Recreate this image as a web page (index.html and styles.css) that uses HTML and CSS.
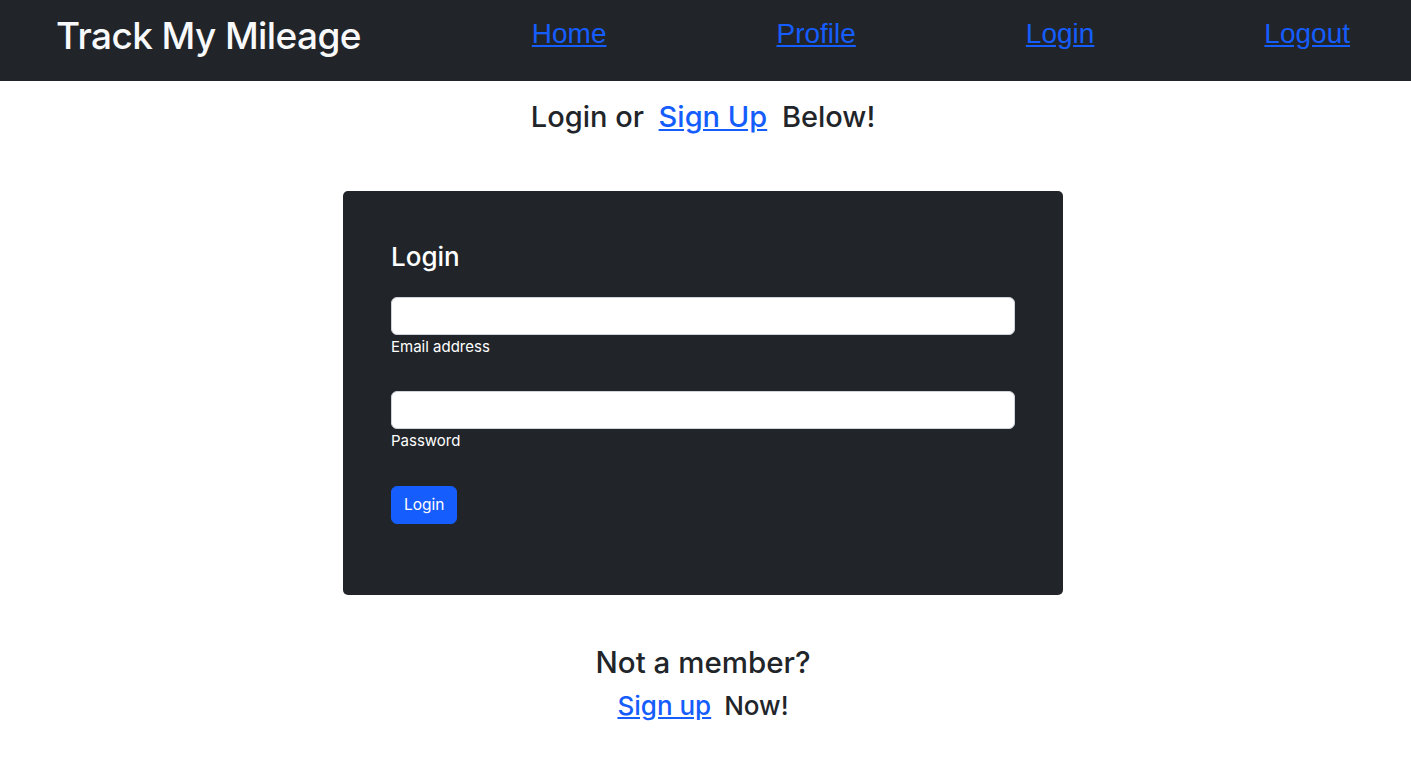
FILE: index.html
```html
<!DOCTYPE html>
<html lang="en">
<head>
<meta charset="utf-8">
<title>Track My Mileage</title>
<link rel="stylesheet" href="styles.css">
</head>
<body>
<nav class="navbar">
  <span class="brand">Track My Mileage</span>
  <ul class="nav-links">
    <li><a href="#">Home</a></li>
    <li><a href="#">Profile</a></li>
    <li><a href="#">Login</a></li>
    <li><a href="#">Logout</a></li>
  </ul>
</nav>
<main class="page">
  <h3 class="lead-title">Login or <a href="#" class="inline-link">Sign Up</a> Below!</h3>
  <section class="card">
    <h4 class="card-title">Login</h4>
    <div class="field">
      <input type="email" class="input">
      <label class="field-label">Email address</label>
    </div>
    <div class="field">
      <input type="password" class="input">
      <label class="field-label">Password</label>
    </div>
    <button class="btn">Login</button>
  </section>
  <h3 class="member-title">Not a member?</h3>
  <h4 class="member-sub"><a href="#" class="inline-link">Sign up</a> Now!</h4>
</main>
</body>
</html>
```
FILE: styles.css
```css
* { box-sizing: border-box; }
html, body { margin: 0; padding: 0; }
body {
  font-family: Inter, "Noto Sans", "Liberation Sans", sans-serif;
  color: #212529;
  background: #fff;
}
a { color: #155dfc; }

.navbar {
  height: 81px;
  background: #212529;
  display: flex;
  align-items: center;
  padding: 0 61px 0 56px;
}
.brand {
  color: #f8f9fa;
  font-size: 37px;
  font-weight: 500;
  letter-spacing: -0.6px;
  margin-top: -10px;
}
.nav-links {
  list-style: none;
  margin: -14px 0 0 auto;
  padding: 0;
  display: flex;
  gap: 170px;
}
.nav-links a {
  font-family: "Liberation Sans", Arial, sans-serif;
  font-size: 28px;
  color: #155dfc;
}

.page {
  display: flex;
  flex-direction: column;
  align-items: center;
  padding-right: 5px;
}
.lead-title {
  margin: 19px 0 0;
  font-size: 29px;
  font-weight: 500;
  line-height: 1.2;
}
.inline-link { margin: 0 7px; }

.card {
  margin-top: 56px;
  width: 720px;
  background: #212529;
  border-radius: 5px;
  padding: 50px 48px 71px;
  color: #fff;
  display: flex;
  flex-direction: column;
  align-items: flex-start;
}
.card-title {
  margin: 0 0 25px;
  font-size: 26px;
  font-weight: 500;
  line-height: 1.2;
}
.field {
  width: 100%;
  margin-bottom: 33px;
  display: flex;
  flex-direction: column;
}
.input {
  width: 100%;
  height: 38px;
  border: 1px solid #ced4da;
  border-radius: 6px;
  background: #fff;
  font: inherit;
}
.field-label {
  font-size: 15px;
  line-height: 1.5;
  margin-top: 1px;
}
.btn {
  background: #155dfc;
  color: #fff;
  border: 1px solid #155dfc;
  border-radius: 6px;
  height: 38px;
  padding: 0 12px;
  font-family: inherit;
  font-size: 15.5px;
}

.member-title {
  margin: 50px 0 0;
  font-size: 29.5px;
  font-weight: 500;
  line-height: 1.2;
}
.member-sub {
  margin: 10px 0 0;
  font-size: 26px;
  font-weight: 500;
  line-height: 1.2;
}
.member-sub .inline-link { margin: 0 6px 0 0; }
```
